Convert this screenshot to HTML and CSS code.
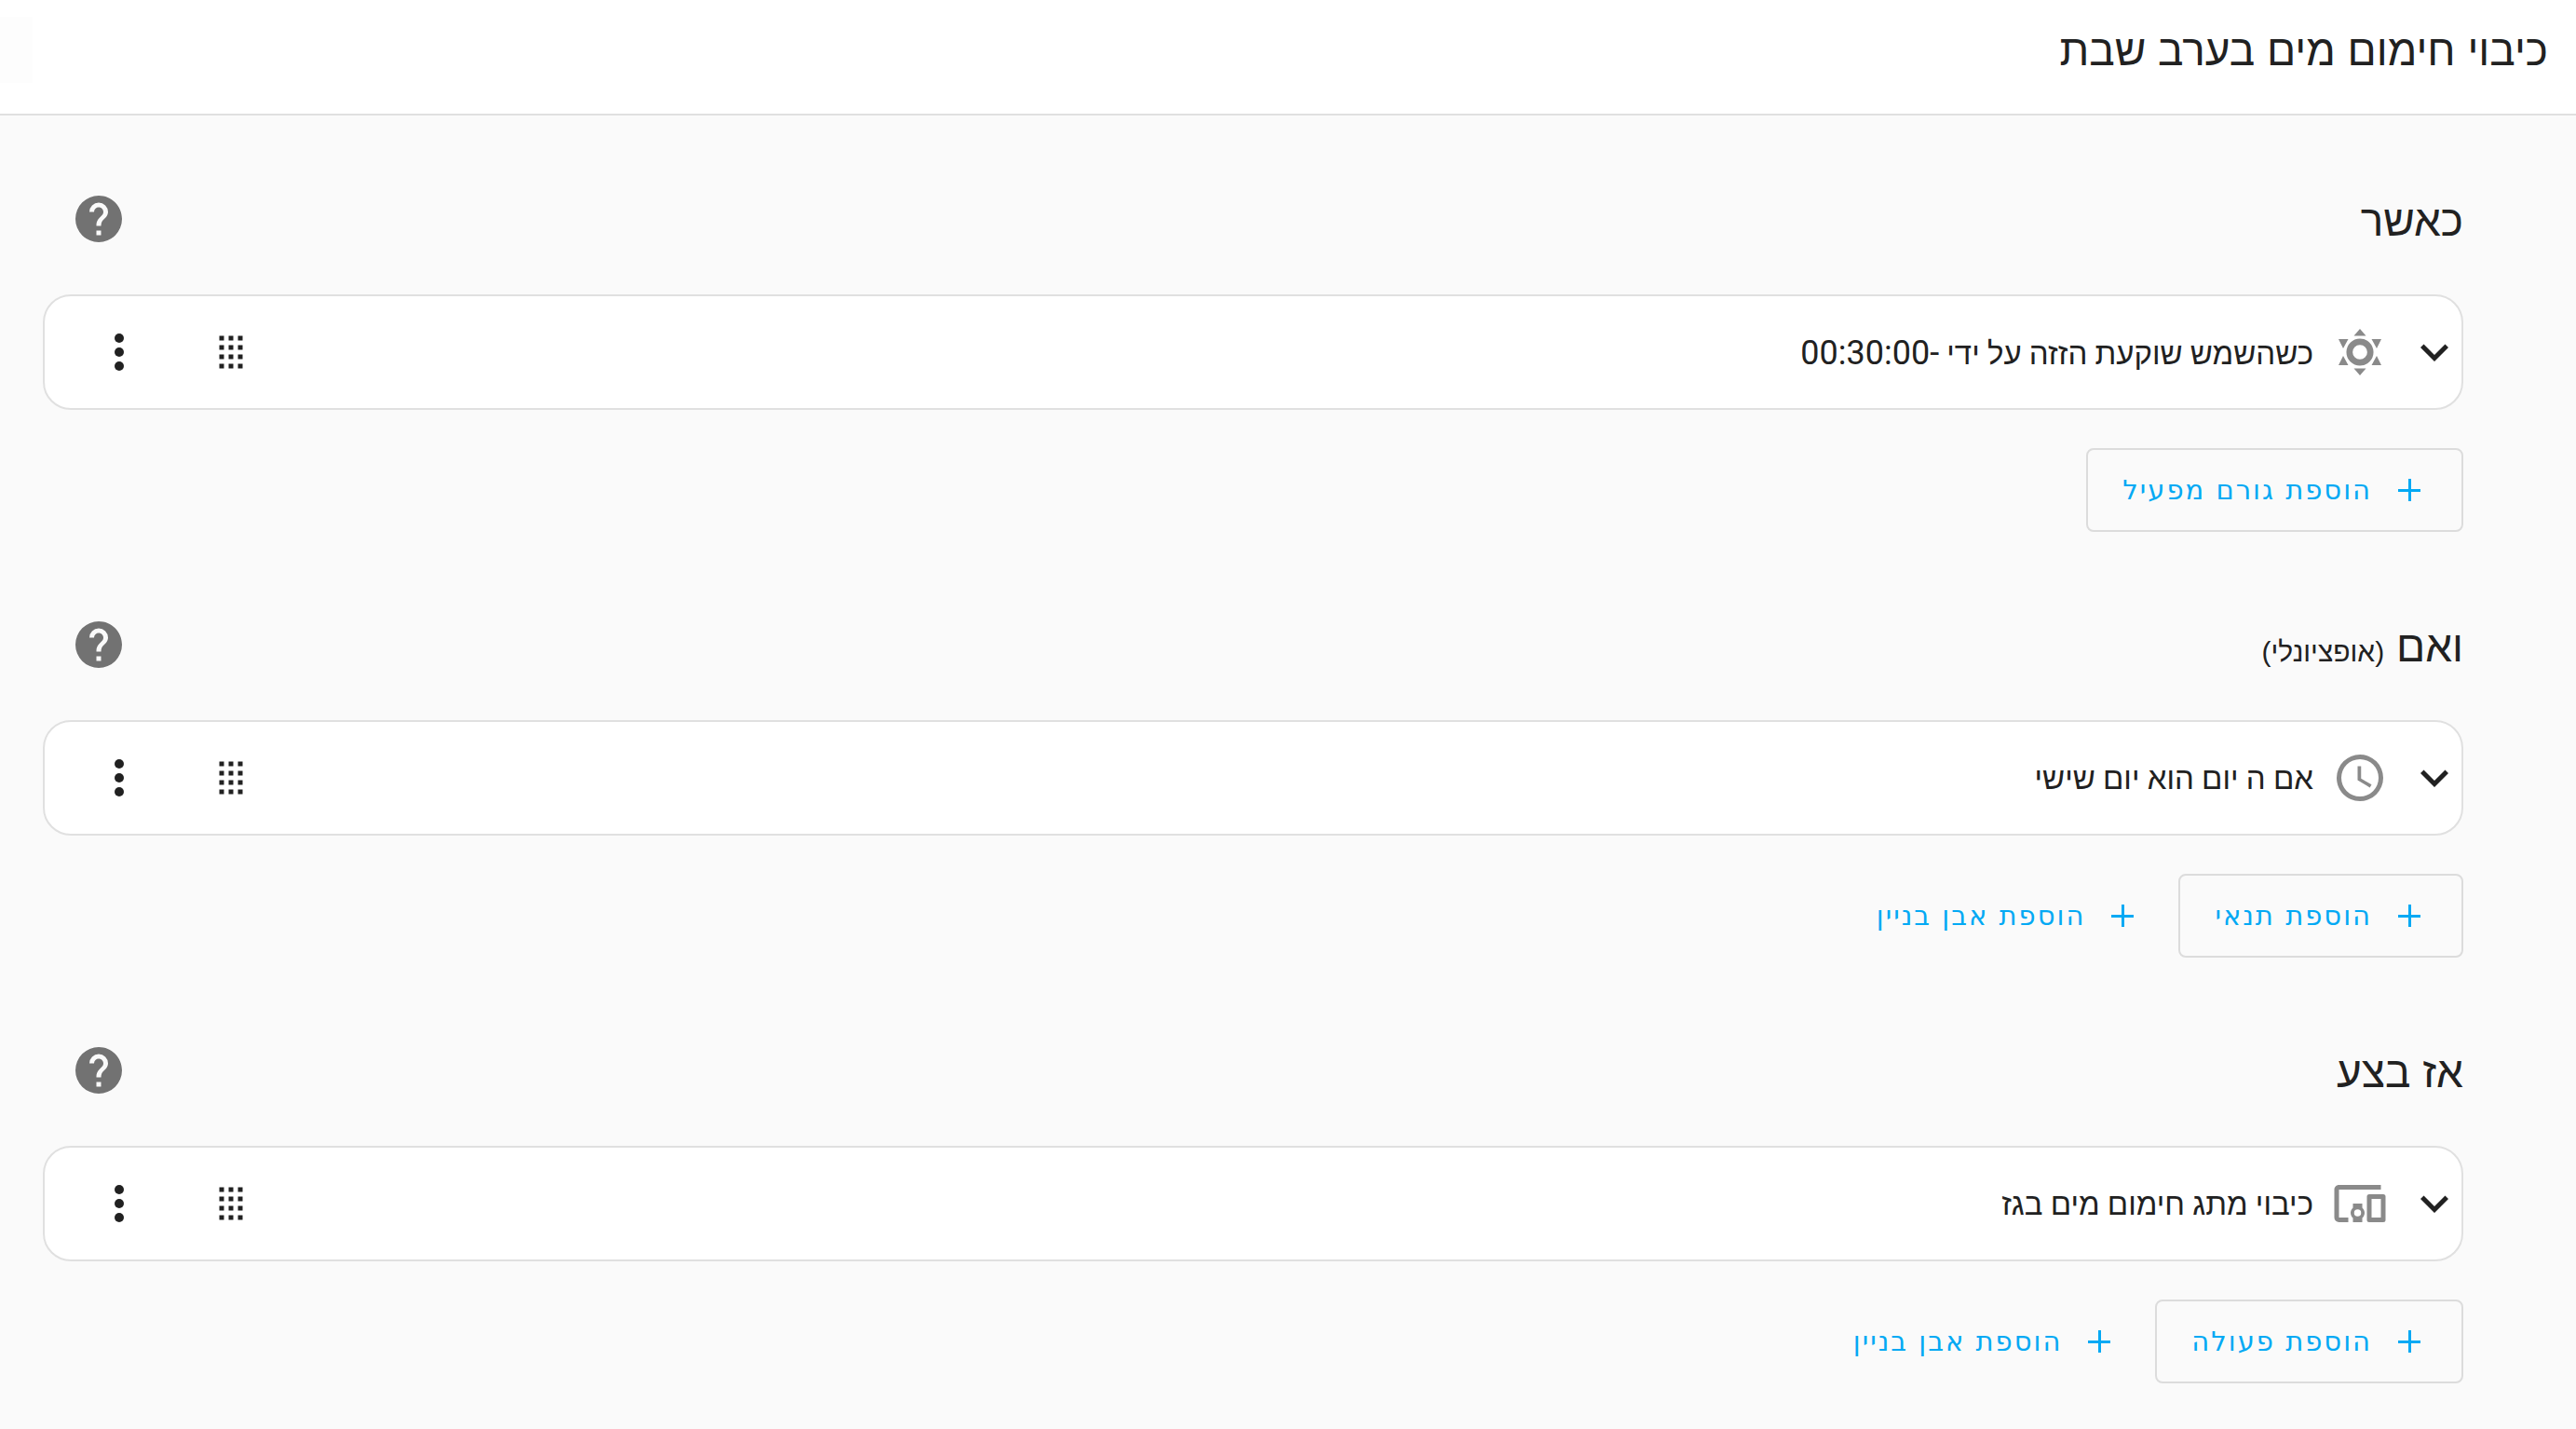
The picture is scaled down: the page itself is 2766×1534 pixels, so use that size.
FILE: index.html
```html
<!DOCTYPE html>
<html lang="he" dir="rtl">
<head>
<meta charset="utf-8">
<title>כיבוי חימום מים בערב שבת</title>
<link rel="stylesheet" href="styles.css">
</head>
<body>
<header class="topbar"><h1 class="title">כיבוי חימום מים בערב שבת</h1><span class="ghost"></span></header>
<main class="content">
  <section class="section">
    <div class="heading-row">
      <h2 class="heading">כאשר</h2>
      <svg class="icon help" viewBox="0 0 24 24"><path d="M15.07,11.25L14.17,12.17C13.45,12.89 13,13.5 13,15H11V14.5C11,13.39 11.45,12.39 12.17,11.67L13.41,10.41C13.78,10.05 14,9.55 14,9C14,7.89 13.1,7 12,7A2,2 0 0,0 10,9H8A4,4 0 0,1 12,5A4,4 0 0,1 16,9C16,9.88 15.64,10.67 15.07,11.25M13,19H11V17H13M12,2A10,10 0 0,0 2,12A10,10 0 0,0 12,22A10,10 0 0,0 22,12C22,6.47 17.5,2 12,2Z"/></svg>
    </div>
    <div class="card">
      <svg class="icon dark" viewBox="0 0 24 24"><path d="M7.41,8.58L12,13.17L16.59,8.58L18,10L12,16L6,10L7.41,8.58Z"/></svg>
      <svg class="icon grey" viewBox="-30 -30 60 60"><circle class="ring" r="11.2"/><path d="M0,-25L6.5,-17.5H-6.5ZM0,25L6.5,17.5H-6.5ZM-23,-14H-12.5L-18,-4ZM23,-14H12.5L18,-4ZM-23,14H-12.5L-18,4ZM23,14H12.5L18,4Z"/></svg>
      <span class="card-text">כשהשמש שוקעת הזזה על ידי <span class="time">-00:30:00</span></span>
      <svg class="icon dark" viewBox="-30 -30 60 60"><path d="M-12.5,-17.5h5v5h-5zM-2.5,-17.5h5v5h-5zM7.5,-17.5h5v5h-5zM-12.5,-7.5h5v5h-5zM-2.5,-7.5h5v5h-5zM7.5,-7.5h5v5h-5zM-12.5,2.5h5v5h-5zM-2.5,2.5h5v5h-5zM7.5,2.5h5v5h-5zM-12.5,12.5h5v5h-5zM-2.5,12.5h5v5h-5zM7.5,12.5h5v5h-5z"/></svg>
      <svg class="icon dark" viewBox="0 0 24 24"><circle cx="12" cy="6" r="2"/><circle cx="12" cy="12" r="2"/><circle cx="12" cy="18" r="2"/></svg>
    </div>
    <div class="actions">
      <button class="btn outlined"><span class="plus"></span>הוספת גורם מפעיל</button>
    </div>
  </section>
  <section class="section">
    <div class="heading-row">
      <h2 class="heading">ואם <small class="optional">(אופציונלי)</small></h2>
      <svg class="icon help" viewBox="0 0 24 24"><path d="M15.07,11.25L14.17,12.17C13.45,12.89 13,13.5 13,15H11V14.5C11,13.39 11.45,12.39 12.17,11.67L13.41,10.41C13.78,10.05 14,9.55 14,9C14,7.89 13.1,7 12,7A2,2 0 0,0 10,9H8A4,4 0 0,1 12,5A4,4 0 0,1 16,9C16,9.88 15.64,10.67 15.07,11.25M13,19H11V17H13M12,2A10,10 0 0,0 2,12A10,10 0 0,0 12,22A10,10 0 0,0 22,12C22,6.47 17.5,2 12,2Z"/></svg>
    </div>
    <div class="card">
      <svg class="icon dark" viewBox="0 0 24 24"><path d="M7.41,8.58L12,13.17L16.59,8.58L18,10L12,16L6,10L7.41,8.58Z"/></svg>
      <svg class="icon grey" viewBox="0 0 24 24"><path d="M12,20A8,8 0 0,0 20,12A8,8 0 0,0 12,4A8,8 0 0,0 4,12A8,8 0 0,0 12,20M12,2A10,10 0 0,1 22,12A10,10 0 0,1 12,22C6.47,22 2,17.5 2,12A10,10 0 0,1 12,2M12.5,7V12.25L17,14.92L16.25,16.15L11,13V7H12.5Z"/></svg>
      <span class="card-text">אם ה יום הוא יום שישי</span>
      <svg class="icon dark" viewBox="-30 -30 60 60"><path d="M-12.5,-17.5h5v5h-5zM-2.5,-17.5h5v5h-5zM7.5,-17.5h5v5h-5zM-12.5,-7.5h5v5h-5zM-2.5,-7.5h5v5h-5zM7.5,-7.5h5v5h-5zM-12.5,2.5h5v5h-5zM-2.5,2.5h5v5h-5zM7.5,2.5h5v5h-5zM-12.5,12.5h5v5h-5zM-2.5,12.5h5v5h-5zM7.5,12.5h5v5h-5z"/></svg>
      <svg class="icon dark" viewBox="0 0 24 24"><circle cx="12" cy="6" r="2"/><circle cx="12" cy="12" r="2"/><circle cx="12" cy="18" r="2"/></svg>
    </div>
    <div class="actions">
      <button class="btn outlined"><span class="plus"></span>הוספת תנאי</button>
      <button class="btn"><span class="plus"></span>הוספת אבן בניין</button>
    </div>
  </section>
  <section class="section">
    <div class="heading-row">
      <h2 class="heading">אז בצע</h2>
      <svg class="icon help" viewBox="0 0 24 24"><path d="M15.07,11.25L14.17,12.17C13.45,12.89 13,13.5 13,15H11V14.5C11,13.39 11.45,12.39 12.17,11.67L13.41,10.41C13.78,10.05 14,9.55 14,9C14,7.89 13.1,7 12,7A2,2 0 0,0 10,9H8A4,4 0 0,1 12,5A4,4 0 0,1 16,9C16,9.88 15.64,10.67 15.07,11.25M13,19H11V17H13M12,2A10,10 0 0,0 2,12A10,10 0 0,0 12,22A10,10 0 0,0 22,12C22,6.47 17.5,2 12,2Z"/></svg>
    </div>
    <div class="card">
      <svg class="icon dark" viewBox="0 0 24 24"><path d="M7.41,8.58L12,13.17L16.59,8.58L18,10L12,16L6,10L7.41,8.58Z"/></svg>
      <svg class="icon grey" viewBox="0 0 24 24"><path d="M3,6H21V4H3C1.89,4 1,4.89 1,6V18A2,2 0 0,0 3,20H7V18H3V6M13,12H9V13.78C8.39,14.33 8,15.11 8,16C8,16.89 8.39,17.67 9,18.22V20H13V18.22C13.61,17.67 14,16.88 14,16C14,15.12 13.61,14.33 13,13.78V12M11,17.5A1.5,1.5 0 0,1 9.5,16A1.5,1.5 0 0,1 11,14.5A1.5,1.5 0 0,1 12.5,16A1.5,1.5 0 0,1 11,17.5M22,8H16A1,1 0 0,0 15,9V19A1,1 0 0,0 16,20H22A1,1 0 0,0 23,19V9A1,1 0 0,0 22,8M21,18H17V10H21V18Z"/></svg>
      <span class="card-text">כיבוי מתג חימום מים בגז</span>
      <svg class="icon dark" viewBox="-30 -30 60 60"><path d="M-12.5,-17.5h5v5h-5zM-2.5,-17.5h5v5h-5zM7.5,-17.5h5v5h-5zM-12.5,-7.5h5v5h-5zM-2.5,-7.5h5v5h-5zM7.5,-7.5h5v5h-5zM-12.5,2.5h5v5h-5zM-2.5,2.5h5v5h-5zM7.5,2.5h5v5h-5zM-12.5,12.5h5v5h-5zM-2.5,12.5h5v5h-5zM7.5,12.5h5v5h-5z"/></svg>
      <svg class="icon dark" viewBox="0 0 24 24"><circle cx="12" cy="6" r="2"/><circle cx="12" cy="12" r="2"/><circle cx="12" cy="18" r="2"/></svg>
    </div>
    <div class="actions">
      <button class="btn outlined"><span class="plus"></span>הוספת פעולה</button>
      <button class="btn"><span class="plus"></span>הוספת אבן בניין</button>
    </div>
  </section>
</main>
</body>
</html>
```
FILE: styles.css
```css
* { box-sizing: border-box; }
html, body { margin: 0; height: 100%; }
body {
  background: #fafafa;
  color: #212121;
  font-family: Roboto, "Liberation Sans", sans-serif;
  overflow: hidden;
}
.topbar {
  position: relative;
  height: 124px;
  background: #fff;
  border-bottom: 2px solid #e0e0e0;
  display: flex;
  align-items: center;
  padding: 0 30px 15px;
}
.ghost {
  position: absolute;
  left: 0;
  top: 18px;
  width: 35px;
  height: 71px;
  background: #fdfdfd;
}
.title {
  margin: 0;
  font: 400 46px "Liberation Sans", sans-serif;
}
.content { padding: 81px 121px 0 46px; }
.section { margin-bottom: 91px; }
.heading-row {
  height: 60px;
  margin-bottom: 51px;
  display: flex;
  align-items: center;
  justify-content: space-between;
}
.heading { margin: 4px 0 0; font: 400 46px "Liberation Sans", sans-serif; }
.optional { font-size: 30px; }
.icon { width: 60px; height: 60px; flex: none; display: block; }
.help { fill: #727272; margin-left: 30px; }
.dark { fill: #212121; }
.grey { fill: #8a8a8a; }
.ring { fill: none; stroke: #8a8a8a; stroke-width: 6.7; }
.card {
  height: 124px;
  background: #fff;
  border: 2px solid #e0e0e0;
  border-radius: 30px;
  display: flex;
  align-items: center;
  gap: 20px;
  padding: 0 0 0 50px;
}
.card-text { flex: 1; font-size: 33px; padding-top: 1px; }
.time { font-size: 36px; }
.card > .icon:first-child { margin-right: -1px; }
.card > .icon:last-child { margin-right: 40px; }
.actions { margin-top: 41px; display: flex; gap: 4px; }
.btn {
  height: 90px;
  background: none;
  border: 0;
  border-radius: 8px;
  padding: 0 44px 0 37px;
  display: flex;
  align-items: center;
  gap: 28px;
  color: #03a9f4;
  font: 400 29px "DejaVu Sans", sans-serif;
  letter-spacing: 2px;
}
.outlined { border: 2px solid #dcdcdc; }
.plus {
  width: 24px;
  height: 24px;
  flex: none;
  background:
    linear-gradient(#03a9f4, #03a9f4) center / 24px 3px no-repeat,
    linear-gradient(#03a9f4, #03a9f4) center / 3px 24px no-repeat;
}
```
